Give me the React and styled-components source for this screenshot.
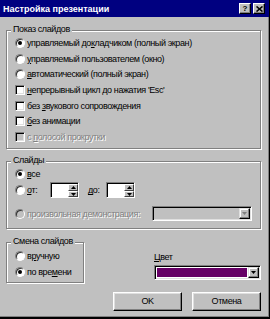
import React from "react";
import styled, { createGlobalStyle } from "styled-components";

const GlobalStyle = createGlobalStyle`
  html, body {
    margin: 0;
    padding: 0;
    background: #c0c0c0;
  }
  body {
    font-family: "Liberation Sans", Arial, sans-serif;
    font-size: 9px;
  }
  * {
    box-sizing: border-box;
  }
`;

const Window = styled.div`
  width: 270px;
  height: 319px;
  background: #c0c0c0;
  border-right: 1px solid #000;
  border-bottom: 2px solid #000;
  box-shadow: inset -1px -1px 0 #808080;
  display: flex;
  flex-direction: column;
  color: #000;
  letter-spacing: -0.4px;
`;

const TitleBar = styled.div`
  height: 17px;
  background: #000080;
  display: flex;
  align-items: center;
  padding: 0 4px 0 3px;
  color: #fff;
  font-weight: bold;
  letter-spacing: 0;
`;

const Title = styled.span`
  flex: 1;
`;

const TitleButton = styled.div`
  width: 12px;
  height: 11px;
  margin-left: 2px;
  background: #c0c0c0;
  border: 1px solid;
  border-color: #fff #000 #000 #fff;
  box-shadow: inset -1px -1px 0 #808080;
  display: flex;
  align-items: center;
  justify-content: center;
  color: #000;
  font-size: 8px;
  line-height: 8px;
`;

const Body = styled.div`
  flex: 1;
  display: flex;
  flex-direction: column;
  padding: 13px 8px 0 6px;
`;

const Group = styled.div`
  display: flex;
  flex-direction: column;
  border: 1px solid #808080;
  box-shadow: 1px 1px 0 #fff, inset 1px 1px 0 #fff;
  padding: 0 8px ${(p) => p.$pb}px 8px;
  margin-top: ${(p) => p.$mt || 0}px;
  width: ${(p) => (p.$w ? p.$w + "px" : "auto")};
  flex: none;
`;

const Legend = styled.span`
  align-self: flex-start;
  height: 11px;
  line-height: 11px;
  margin: -7px 0 0 -4px;
  padding: 0 2px;
  background: #c0c0c0;
  white-space: nowrap;
`;

const Row = styled.div`
  display: flex;
  align-items: center;
  height: ${(p) => p.$h || 15.7}px;
  margin-top: ${(p) => p.$mt || 0}px;
  white-space: nowrap;
  flex: none;
`;

const Radio = styled.span`
  width: 10px;
  height: 10px;
  flex: none;
  border-radius: 50%;
  margin-right: 2px;
  background: ${(p) => (p.$disabled ? "#c0c0c0" : "#fff")};
  border: 1px solid;
  border-color: #808080 #fff #fff #808080;
  box-shadow: inset 1px 1px 0 #303030;
  display: flex;
  align-items: center;
  justify-content: center;

  &::after {
    content: "";
    width: 4px;
    height: 4px;
    border-radius: 50%;
    background: #000;
    display: ${(p) => (p.$on ? "block" : "none")};
  }
`;

const Check = styled.span`
  width: 10px;
  height: 10px;
  flex: none;
  margin-right: 2px;
  background: ${(p) => (p.$disabled ? "#c0c0c0" : "#fff")};
  border: 1px solid;
  border-color: #808080 #fff #fff #808080;
  box-shadow: inset 1px 1px 0 #000, inset -1px -1px 0 #dfdfdf;
`;

const Label = styled.span`
  flex: none;
  color: ${(p) => (p.$disabled ? "#808080" : "#000")};
  text-shadow: ${(p) => (p.$disabled ? "1px 1px 0 #fff" : "none")};
  width: ${(p) => (p.$w ? p.$w + "px" : "auto")};
  margin-left: ${(p) => p.$ml || 0}px;
`;

const Key = styled.span`
  text-decoration: underline;
`;

const Spinner = styled.div`
  width: 29px;
  height: 16px;
  flex: none;
  display: flex;
  justify-content: flex-end;
  background: #fff;
  border: 1px solid;
  border-color: #808080 #fff #fff #808080;
  box-shadow: inset 1px 1px 0 #000;
  padding: 1px 0 0 1px;
`;

const SpinButtons = styled.div`
  width: 10px;
  display: flex;
  flex-direction: column;
`;

const SpinButton = styled.div`
  flex: 1;
  background: #c0c0c0;
  border: 1px solid;
  border-color: #fff #404040 #404040 #fff;
  display: flex;
  align-items: center;
  justify-content: center;
`;

const Combo = styled.div`
  width: ${(p) => p.$w}px;
  height: 15px;
  flex: none;
  display: flex;
  margin-left: auto;
  background: ${(p) => (p.$disabled ? "#c0c0c0" : "#fff")};
  border: 1px solid;
  border-color: #808080 #fff #fff #808080;
  box-shadow: inset 1px 1px 0 #000, inset -1px -1px 0 #dfdfdf;
  padding: 1px 1px 1px 1px;
`;

const Swatch = styled.div`
  flex: 1;
  margin: 1px 1px 1px 1px;
  background: ${(p) => p.$color || "transparent"};
`;

const DropButton = styled.div`
  width: 11px;
  flex: none;
  background: #c0c0c0;
  border: 1px solid;
  border-color: #dfdfdf #000 #000 #dfdfdf;
  box-shadow: inset -1px -1px 0 #808080, inset 1px 1px 0 #fff;
  display: flex;
  align-items: center;
  justify-content: center;
`;

const BottomRow = styled.div`
  display: flex;
  align-items: flex-start;
  margin-top: 13px;
`;

const ColorColumn = styled.div`
  margin-left: auto;
  width: 107px;
  display: flex;
  flex-direction: column;
  padding-top: 10px;
`;

const FieldLabel = styled.span`
  height: 11px;
  line-height: 11px;
  margin-bottom: 2px;
`;

const ButtonRow = styled.div`
  display: flex;
  justify-content: flex-end;
  gap: 10px;
  margin-top: 9px;
`;

const Button = styled.button`
  width: 69px;
  height: 19px;
  padding: 0;
  font: inherit;
  letter-spacing: inherit;
  color: #000;
  background: #c0c0c0;
  border: 1px solid;
  border-color: #fff #000 #000 #fff;
  box-shadow: inset -1px -1px 0 #808080, inset 1px 1px 0 #dfdfdf;
`;

const Arrow = ({ dir = "down", color = "#000" }) => (
  <svg width="5" height="3" viewBox="0 0 5 3">
    <path d={dir === "up" ? "M2.5 0L5 3H0Z" : "M0 0H5L2.5 3Z"} fill={color} />
  </svg>
);

const SpinBox = () => (
  <Spinner>
    <SpinButtons>
      <SpinButton>
        <Arrow dir="up" />
      </SpinButton>
      <SpinButton>
        <Arrow />
      </SpinButton>
    </SpinButtons>
  </Spinner>
);

const showOptions = [
  { type: "radio", on: true, text: <>управляемый до<Key>к</Key>ладчиком (полный экран)</> },
  { type: "radio", text: <><Key>у</Key>правляемый пользователем (окно)</> },
  { type: "radio", text: <><Key>а</Key>втоматический (полный экран)</> },
  { type: "check", text: <><Key>н</Key>епрерывный цикл до нажатия 'Esc'</> },
  { type: "check", text: <>без <Key>з</Key>вукового сопровождения</> },
  { type: "check", text: <><Key>б</Key>ез анимации</> },
  { type: "check", disabled: true, text: <>с <Key>п</Key>олосой прокрутки</> },
];

export default function App() {
  return (
    <>
      <GlobalStyle />
      <Window>
        <TitleBar>
          <Title>Настройка презентации</Title>
          <TitleButton>?</TitleButton>
          <TitleButton>
            <svg width="7" height="6" viewBox="0 0 7 6">
              <path d="M0.5 0.5L6.5 5.5M6.5 0.5L0.5 5.5" stroke="#000" strokeWidth="1.6" />
            </svg>
          </TitleButton>
        </TitleBar>

        <Body>
          <Group $pb={3}>
            <Legend>Показ слайдов</Legend>
            {showOptions.map((o, i) => (
              <Row key={i}>
                {o.type === "radio" ? (
                  <Radio $on={o.on} />
                ) : (
                  <Check $disabled={o.disabled} />
                )}
                <Label $disabled={o.disabled}>{o.text}</Label>
              </Row>
            ))}
          </Group>

          <Group $mt={12} $pb={6}>
            <Legend>Слайды</Legend>
            <Row $h={15} $mt={1}>
              <Radio $on />
              <Label>
                <Key>в</Key>се
              </Label>
            </Row>
            <Row $h={17}>
              <Radio />
              <Label $w={23}>
                <Key>о</Key>т:
              </Label>
              <SpinBox />
              <Label $ml={9} $w={18}>
                <Key>д</Key>о:
              </Label>
              <SpinBox />
            </Row>
            <Row $h={16} $mt={7}>
              <Radio $disabled />
              <Label $disabled>произвольная демонстрация:</Label>
              <Combo $w={100} $disabled>
                <Swatch />
                <DropButton>
                  <Arrow color="#808080" />
                </DropButton>
              </Combo>
            </Row>
          </Group>

          <BottomRow>
            <Group $w={78} $pb={2}>
              <Legend>Смена слайдов</Legend>
              <Row $h={16} $mt={1}>
                <Radio />
                <Label>
                  в<Key>р</Key>учную
                </Label>
              </Row>
              <Row $h={16}>
                <Radio $on />
                <Label>
                  по вре<Key>м</Key>ени
                </Label>
              </Row>
            </Group>
            <ColorColumn>
              <FieldLabel>
                <Key>Ц</Key>вет
              </FieldLabel>
              <Combo $w={107}>
                <Swatch $color="#660066" />
                <DropButton>
                  <Arrow />
                </DropButton>
              </Combo>
            </ColorColumn>
          </BottomRow>

          <ButtonRow>
            <Button>OK</Button>
            <Button>Отмена</Button>
          </ButtonRow>
        </Body>
      </Window>
    </>
  );
}
